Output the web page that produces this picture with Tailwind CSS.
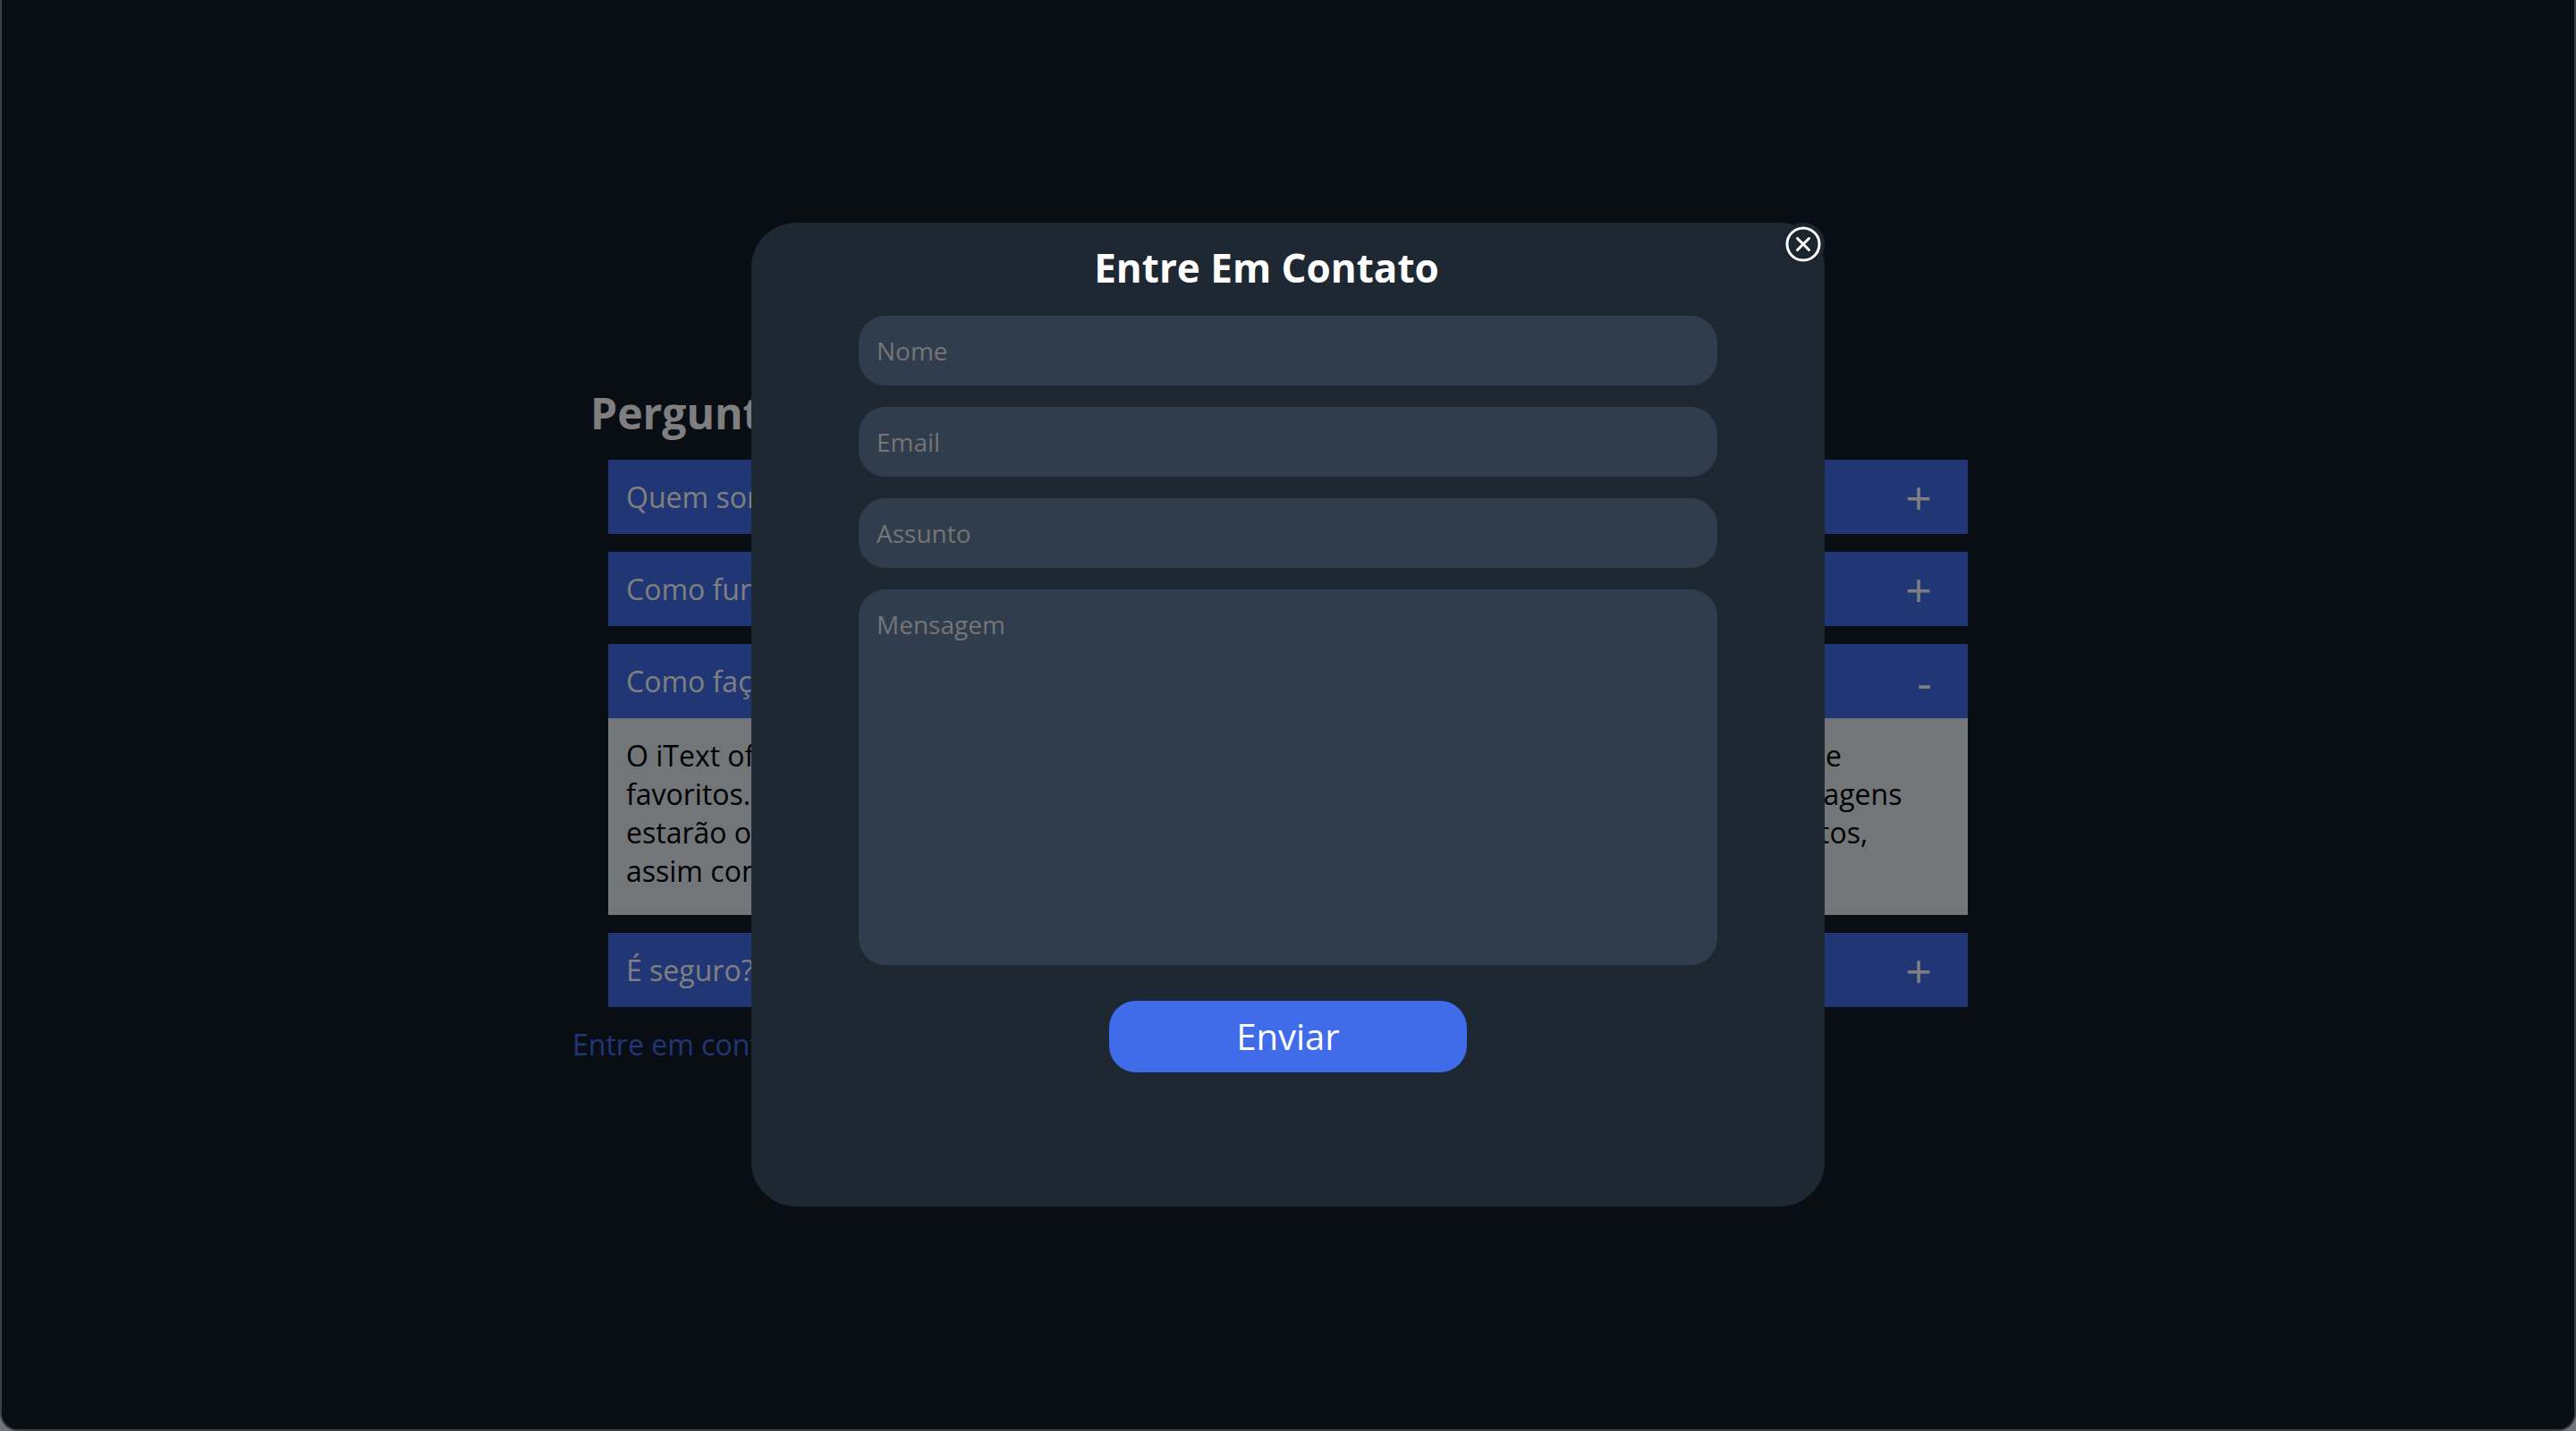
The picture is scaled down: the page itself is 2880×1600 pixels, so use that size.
<!DOCTYPE html>
<html lang="pt-BR">
<head>
<meta charset="utf-8">
<meta name="viewport" content="width=device-width, initial-scale=1">
<title>Perguntas frequentes</title>
<script src="https://cdn.jsdelivr.net/npm/@tailwindcss/browser@4"></script>
</head>
<body class="bg-[#6c7780] font-['Open_Sans',sans-serif] text-[32px] leading-[43px]">
<div class="relative flex min-h-screen flex-col overflow-hidden rounded-b-[20px] border-x-2 border-b-2 border-[#3b3f45] bg-[#121a28]">

  <!-- FAQ page -->
  <main class="flex grow flex-col items-center justify-center pt-5">
    <div class="w-full max-w-[1600px]">
      <h1 class="mb-5 px-5 text-[48px] leading-[65px] font-bold text-white">Perguntas Frequentes</h1>
      <div class="flex flex-col gap-5 px-10 text-white">
        <button type="button" class="flex h-[83px] items-center justify-between bg-[#406cea] pr-10 pl-5 text-left"><span>Quem somos?</span><span class="text-[52px] font-medium">+</span></button>
        <button type="button" class="flex h-[83px] items-center justify-between bg-[#406cea] pr-10 pl-5 text-left"><span>Como funciona?</span><span class="text-[52px] font-medium">+</span></button>
        <section>
          <button type="button" aria-expanded="true" class="flex h-[83px] w-full items-center justify-between bg-[#406cea] pr-10 pl-5 text-left"><span>Como faço para favoritar?</span><span class="text-[52px] font-medium">-</span></button>
          <p class="bg-[#e6ecf0] px-5 pt-5 pb-7 text-black">O iText oferece sempre uma forma simples de organizar as suas conversas, com contatos e<br>favoritos. Basta abrir a conversa, já escolher lá a opção desejada, e sempre todas as mensagens<br>estarão organizadas em um só lugar, já separadas por data, por assunto e por mais contatos,<br>assim como os seus grupos.</p>
        </section>
        <button type="button" class="flex h-[83px] items-center justify-between bg-[#406cea] pr-10 pl-5 text-left"><span>É seguro?</span><span class="text-[52px] font-medium">+</span></button>
      </div>
      <a href="#contato" class="mt-5 inline-block text-[#406cea]">Entre em contato</a>
    </div>
  </main>

  <!-- Backdrop with the contact dialog -->
  <div class="absolute inset-0 flex items-center justify-center bg-black/50">
    <div id="contato" role="dialog" aria-labelledby="titulo" class="relative min-h-[1100px] w-full max-w-[1200px] rounded-[50px] bg-[#1e2833] pt-5">
      <button type="button" aria-label="Fechar" class="absolute top-0 right-0 flex size-12 items-center justify-center rounded-full bg-[#1c2631] text-white">
        <svg viewBox="0 0 48 48" class="size-12" fill="none" stroke="currentColor" stroke-width="3" stroke-linecap="round"><circle cx="24" cy="24" r="18"/><path d="M17.500 17.500l13 13M30.500 17.500l-13 13"/></svg>
      </button>
      <h2 id="titulo" class="mb-6 pr-12 text-center text-[44px] leading-[60px] font-bold text-white">Entre Em Contato</h2>
      <form class="flex flex-col gap-6 px-[120px] text-[28px] leading-[38px] text-white">
        <input type="text" aria-label="Nome" placeholder="Nome" class="h-[78px] rounded-[30px] bg-[#303d4d] px-5 placeholder:text-[#757575]">
        <input type="email" aria-label="Email" placeholder="Email" class="h-[78px] rounded-[30px] bg-[#303d4d] px-5 placeholder:text-[#757575]">
        <input type="text" aria-label="Assunto" placeholder="Assunto" class="h-[78px] rounded-[30px] bg-[#303d4d] px-5 placeholder:text-[#757575]">
        <textarea aria-label="Mensagem" placeholder="Mensagem" class="h-[420px] resize-none rounded-[30px] bg-[#303d4d] p-5 placeholder:text-[#757575]"></textarea>
        <button type="submit" class="mt-4 h-20 w-[400px] self-center rounded-[30px] bg-[#406cea] text-[40px] text-white">Enviar</button>
      </form>
    </div>
  </div>
</div>
</body>
</html>
